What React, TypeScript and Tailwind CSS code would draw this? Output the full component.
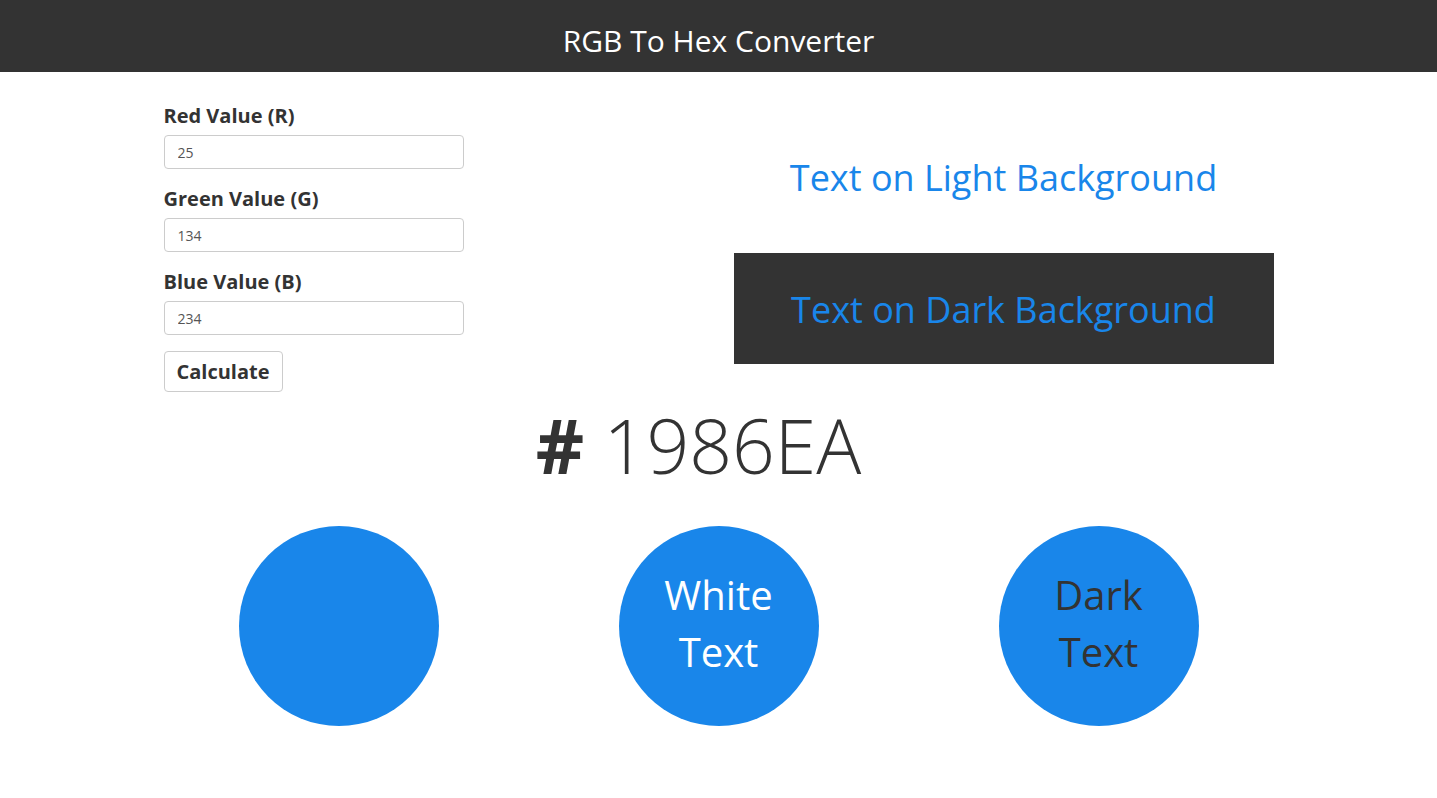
import React from "react";

export default function App() {
  return (
    <div className="min-h-[798px] bg-white font-['Open_Sans',sans-serif] text-[#333]">
      <header className="h-[72px] bg-[#333] flex items-center justify-center pt-[9px]">
        <h1 className="text-white text-[30px] leading-none">RGB To Hex Converter</h1>
      </header>
      <div className="w-[1140px] mx-auto">
        <div className="flex">
          <div className="w-1/2 px-[15px] pt-[32px]">
            {[
              ["Red Value (R)", "25"],
              ["Green Value (G)", "134"],
              ["Blue Value (B)", "234"],
            ].map(([label, val]) => (
              <div key={label} className="mb-[18px]">
                <label className="block font-bold text-[20px] leading-[24px] mb-[7px]">{label}</label>
                <input
                  readOnly
                  value={val}
                  className="block w-[300px] h-[34px] border border-[#ccc] rounded-[4px] px-[13px] text-[14px] text-[#555] outline-none"
                />
              </div>
            ))}
            <button className="-mt-[2px] h-[41px] px-[12px] border border-[#ccc] rounded-[4px] bg-white font-bold text-[20px] leading-[24px] text-[#333]">
              Calculate
            </button>
          </div>
          <div className="w-1/2 px-[15px] pt-[51px]">
            <div className="h-[110px] flex items-center justify-center text-[36px] text-[#1986EA]">
              Text on Light Background
            </div>
            <div className="mt-[20px] h-[111px] bg-[#333] flex items-center justify-center pt-[3px] text-[36px] text-[#1986EA]">
              Text on Dark Background
            </div>
          </div>
        </div>
        <div className="mt-[14px] text-center text-[75px] leading-[79px] pr-[40px]">
          <span className="font-bold">#</span> <span className="font-light">1986EA</span>
        </div>
        <div className="mt-[41px] grid grid-cols-3">
          <div className="flex justify-center">
            <div className="w-[200px] h-[200px] rounded-full bg-[#1986EA]" />
          </div>
          <div className="flex justify-center">
            <div className="w-[200px] h-[200px] rounded-full bg-[#1986EA] flex items-center justify-center pb-[6px] text-center text-white text-[40px] leading-[57px]">
              White<br />Text
            </div>
          </div>
          <div className="flex justify-center">
            <div className="w-[200px] h-[200px] rounded-full bg-[#1986EA] flex items-center justify-center pb-[6px] text-center text-[#333] text-[40px] leading-[57px]">
              Dark<br />Text
            </div>
          </div>
        </div>
      </div>
    </div>
  );
}
